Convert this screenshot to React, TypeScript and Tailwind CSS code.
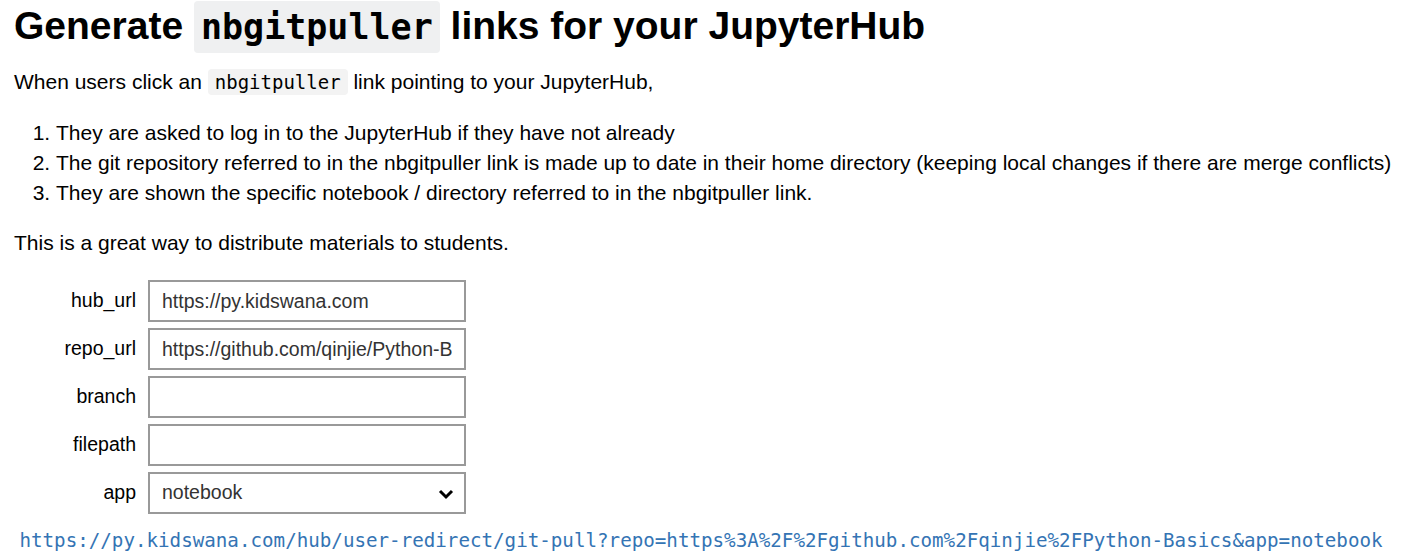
import React from "react";

const mono = "font-['DejaVu_Sans_Mono','Liberation_Mono',monospace]";

const fields = [
  { name: "hub_url", value: "https://py.kidswana.com" },
  { name: "repo_url", value: "https://github.com/qinjie/Python-Basics" },
  { name: "branch", value: "" },
  { name: "filepath", value: "" },
];

export default function App() {
  return (
    <div className="px-[14px] text-black font-['Liberation_Sans',Arial,sans-serif] text-[21px] bg-white min-h-screen">
      <h1 className="text-[39px] font-bold leading-[52px] m-0">
        Generate{" "}
        <code className={`${mono} bg-[#eff0f1] rounded px-[7px] text-[35px] inline-block leading-[52px]`}>
          nbgitpuller
        </code>{" "}
        links for your JupyterHub
      </h1>
      <p className="mt-[14px] leading-[30px]">
        When users click an{" "}
        <code className={`${mono} bg-[#f3f3f3] rounded px-[7px] py-[2px] text-[19px]`}>nbgitpuller</code>{" "}
        link pointing to your JupyterHub,
      </p>
      <ol className="list-decimal pl-[42px] mt-[21px] leading-[30px] whitespace-nowrap">
        <li>They are asked to log in to the JupyterHub if they have not already</li>
        <li>
          The git repository referred to in the nbgitpuller link is made up to date in their home directory (keeping
          local changes if there are merge conflicts)
        </li>
        <li>They are shown the specific notebook / directory referred to in the nbgitpuller link.</li>
      </ol>
      <p className="mt-[20px] leading-[30px]">This is a great way to distribute materials to students.</p>

      <div className="mt-[22px] flex flex-col gap-[6px]">
        {fields.map((f) => (
          <div key={f.name} className="flex items-center">
            <label className="w-[134px] text-right pr-[12px] text-[19.5px]">{f.name}</label>
            <input
              defaultValue={f.value}
              className="w-[318px] h-[42px] border-2 border-[#999] px-[12px] text-[19.5px] text-[#333] outline-none"
            />
          </div>
        ))}
        <div className="flex items-center">
          <label className="w-[134px] text-right pr-[12px] text-[19.5px]">app</label>
          <div className="relative w-[318px] h-[42px] border-2 border-[#999] flex items-center px-[12px] text-[19.5px] text-[#333]">
            <span>notebook</span>
            <svg className="absolute right-[10px] top-[12px]" width="16" height="16" viewBox="0 0 16 16">
              <path d="M2 5 L8 11 L14 5" fill="none" stroke="#000" strokeWidth="3" />
            </svg>
          </div>
        </div>
      </div>

      <div className="mt-[10px] text-center">
        <a className={`${mono} text-[19.2px] text-[#3474b4] leading-[30px]`} href="#">
          https://py.kidswana.com/hub/user-redirect/git-pull?repo=https%3A%2F%2Fgithub.com%2Fqinjie%2FPython-Basics&amp;app=notebook
        </a>
      </div>
    </div>
  );
}
